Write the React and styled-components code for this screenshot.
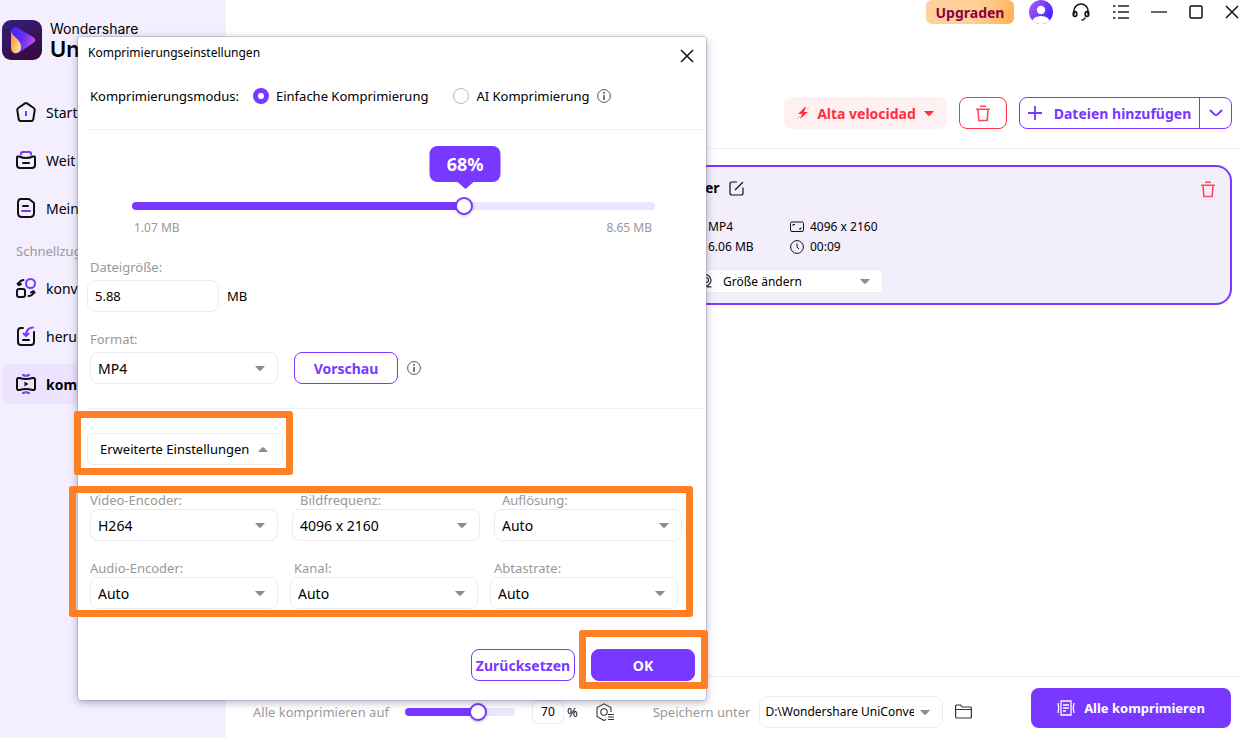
import React, { useState } from 'react'
import styled, { createGlobalStyle } from 'styled-components';

const GlobalStyle = createGlobalStyle`
  * { box-sizing: border-box; }
  body {
    margin: 0;
    background: #fff;
    color: #000;
    font-family: "Noto Sans", "Open Sans", sans-serif;
    font-size: 13px;
  }
  button, input, select { font-family: inherit; font-size: inherit; color: inherit; margin: 0; }
  button { cursor: pointer; padding: 0; white-space: nowrap; }
  svg { display: block; flex: none; }
`;

const Page = styled.div`
  position: relative;
  display: flex;
  min-height: 100vh;
  overflow: hidden;
`;

/* sidebar */
const Sidebar = styled.aside`
  flex: 0 0 226px;
  background: #f3effe;
  padding: 20px 2px;
`;
const Logo = styled.div`
  display: flex;
  gap: 8px;
  margin-bottom: 32px;
`;
const Brand = styled.div`
  font-family: Inter, sans-serif;
  font-size: 14px;
  line-height: 18px;
  white-space: nowrap;
`;
const Product = styled.div`
  font-size: 22px;
  font-weight: 600;
  line-height: 22px;
`;
const Nav = styled.nav`
  display: flex;
  flex-direction: column;
  gap: 8px;
`;
const NavItem = styled.a`
  display: flex;
  align-items: center;
  gap: 10px;
  height: 40px;
  padding-left: 14px;
  border-radius: 8px;
  font-size: 14px;
  font-weight: ${({ $active }) => ($active ? 700 : 400)};
  background: ${({ $active }) => ($active ? "#ece3ff" : "transparent")};
  color: #000;
  text-decoration: none;
`;
const NavTitle = styled.div`
  padding-left: 14px;
  line-height: 22px;
  margin: 4px 0 -2px;
  color: #999;
`;

/* main area */
const Main = styled.main`
  flex: 1;
  min-width: 0;
  display: flex;
  flex-direction: column;
`;
const WindowBar = styled.header`
  display: flex;
  justify-content: flex-end;
  align-items: center;
  height: 24px;
  padding-right: 3px;
`;
const Upgrade = styled.button`
  width: 88px;
  height: 24px;
  border: 0;
  border-radius: 6px;
  background: linear-gradient(110deg, #ffcf9c, #ffd09a 55%, #ffb04f);
  color: #8b0046;
  font-size: 14px;
  font-weight: 700;
  margin-right: 15px;
`;
const IconButton = styled.button`
  display: flex;
  align-items: center;
  justify-content: center;
  border: 0;
  background: none;
`;
const WindowButtons = styled.div`
  display: flex;
  align-items: center;
  gap: 22px;
  margin-left: 18px;
`;
const Toolbar = styled.div`
  display: flex;
  justify-content: flex-end;
  gap: 12px;
  margin: 73px 0 0 16px;
  padding: 0 10px 19px 0;
  border-bottom: 1px solid #f0f0f2;
`;
const SpeedButton = styled.button`
  display: flex;
  align-items: center;
  justify-content: center;
  gap: 8px;
  width: 163px;
  height: 32px;
  border: 0;
  border-radius: 8px;
  background: #fff1f2;
  color: #ff2e43;
  font-size: 14px;
  font-weight: 700;
`;
const TrashButton = styled(IconButton)`
  width: 48px;
  height: 32px;
  border: 1px solid #ff2e43;
  border-radius: 8px;
`;
const SplitButton = styled.div`
  display: flex;
  height: 32px;
  border: 1px solid #7838ff;
  border-radius: 8px;
  color: #7838ff;
`;
const AddButton = styled(IconButton)`
  width: 180px;
  gap: 12px;
  border-right: 1px solid #7838ff;
  font-size: 14px;
  font-weight: 700;
`;
const MoreButton = styled(IconButton)`
  width: 31px;
`;
const Card = styled.section`
  display: flex;
  justify-content: flex-end;
  align-items: flex-start;
  height: 140px;
  margin: 16px 10px 0 16px;
  padding: 10px 14px;
  border: 2px solid #7838ff;
  border-radius: 16px;
  background: #f3eefc;
`;
const CardTrash = styled(IconButton)`
  height: 24px;
`;
const FileInfo = styled.div`
  display: flex;
  flex-direction: column;
  width: 204px;
  margin-right: 318px;
  font-size: 12px;
`;
const FileName = styled.div`
  display: flex;
  align-items: center;
  gap: 9px;
  margin-left: 27px;
  line-height: 22px;
  font-size: 14px;
  font-weight: 700;
`;
const Facts = styled.dl`
  display: grid;
  grid-template-columns: 82px 1fr;
  row-gap: 2px;
  margin: 19px 0 13px 30px;
  line-height: 18px;
`;
const Fact = styled.dd`
  display: flex;
  align-items: center;
  gap: 6px;
  margin: 0;
  white-space: nowrap;
`;

/* footer */
const Footer = styled.footer`
  display: flex;
  align-items: center;
  margin-top: auto;
  height: 62px;
  padding: 8px 11px 0 27px;
  border-top: 1px solid #f0f0f2;
  white-space: nowrap;
`;
const Muted = styled.label`
  color: #999;
  line-height: 18px;
`;
const Percent = styled.input`
  width: 32px;
  height: 24px;
  border: 1px solid #ececee;
  border-radius: 6px;
  margin: 0 3px 0 17px;
  padding: 0;
  text-align: center;
  font-size: 12px;
`;
const FooterIcon = styled(IconButton)`
  width: 24px;
  margin-left: 16px;
`;
const FolderButton = styled(IconButton)`
  margin-left: 12px;
`;
const FooterSlider = styled.div`
  width: 110px;
  margin-left: 16px;
`;
const SavePath = styled.div`
  display: flex;
  align-items: center;
  gap: 9px;
  margin-left: 35px;
`;
const CompressAll = styled(IconButton)`
  align-self: flex-start;
  width: 200px;
  height: 40px;
  gap: 9px;
  margin: 3px 0 0 auto;
  border-radius: 8px;
  background: #7838ff;
  color: #fff;
  font-weight: 700;
`;

/* form parts */
const SelectBox = styled.div`
  position: relative;
  width: ${({ $width }) => $width || 188}px;
`;
const ArrowSpot = styled.span`
  position: absolute;
  right: 13px;
  top: 50%;
  margin-top: -2px;
  pointer-events: none;
`;
const IconSpot = styled.span`
  position: absolute;
  left: 20px;
  top: 5px;
  pointer-events: none;
`;
const SelectInput = styled.select`
  display: block;
  width: 100%;
  height: ${({ $small }) => ($small ? 24 : 32)}px;
  padding: ${({ $inset }) => `0 28px 0 ${$inset || 7}px`};
  border: 1px solid #ececee;
  border-radius: ${({ $small }) => ($small ? 4 : 8)}px;
  background: #fff;
  appearance: none;
  font-size: ${({ $fontSize }) => $fontSize || 14}px;
`;
const Range = styled.input`
  display: block;
  width: 100%;
  height: 18px;
  appearance: none;
  background: none;
  &::-webkit-slider-runnable-track {
    height: 8px;
    border-radius: 4px;
    background: linear-gradient(to right, #7838ff var(--fill), #ede5ff var(--fill));
  }
  &::-webkit-slider-thumb {
    appearance: none;
    width: 18px;
    height: 18px;
    margin-top: -5px;
    border: 2px solid #7838ff;
    border-radius: 50%;
    background: #fff;
    box-shadow: 0 1px 3px rgba(60, 30, 120, 0.3);
  }
`;

/* dialog */
const Dialog = styled.section`
  position: absolute;
  top: 37px;
  left: 78px;
  width: 628px;
  padding-bottom: 19px;
  border-radius: 3px;
  background: #fff;
  box-shadow: 0 0 0 1px rgba(120, 110, 150, 0.25), 0 2px 8px rgba(50, 40, 90, 0.4);
`;
const DialogHead = styled.header`
  display: flex;
  justify-content: space-between;
  align-items: flex-start;
  height: 42px;
  padding: 6px 9px 0 10px;
`;
const DialogTitle = styled.h1`
  margin: 0;
  font-size: 12px;
  font-weight: 400;
  line-height: 20px;
`;
const CloseButton = styled(IconButton)`
  width: 20px;
  height: 20px;
  margin-top: 3px;
`;
const Modes = styled.div`
  display: flex;
  align-items: center;
  height: 51px;
  margin-left: 9px;
  padding: 0 0 16px 3px;
  border-bottom: 1px solid #f0f0f2;
`;
const Radio = styled.label`
  display: flex;
  align-items: center;
  gap: 7px;
  margin-right: ${({ $after }) => $after}px;
  input {
    appearance: none;
    width: 16px;
    height: 16px;
    border: 1px solid #b9b5c4;
    border-radius: 50%;
  }
  input:checked { border: 5px solid #7838ff; }
`;
const ModeLabel = styled.span`
  width: 163px;
`;
const Level = styled.div`
  position: relative;
  padding: 67px 51px 0 54px;
`;
const Bubble = styled.output`
  position: absolute;
  top: 16px;
  width: 71px;
  transform: translateX(-50%);
  border-radius: 8px;
  background: #7838ff;
  color: #fff;
  font-size: 18px;
  font-weight: 700;
  line-height: 36px;
  text-align: center;
  &::after {
    content: "";
    position: absolute;
    left: 28px;
    top: 36px;
    border: 8px solid transparent;
    border-top: 7px solid #7838ff;
    border-bottom: 0;
  }
`;
const Limits = styled.div`
  display: flex;
  justify-content: space-between;
  padding: 4px 3px 0 2px;
  line-height: 18px;
  font-size: 12px;
  color: #999;
`;
const Form = styled.div`
  display: flex;
  flex-direction: column;
  margin: 21px 0 0 9px;
  padding: 0 0 24px 3px;
  border-bottom: 1px solid #f0f0f2;
`;
const FormLine = styled.div`
  display: flex;
  align-items: center;
  gap: 8px;
  margin: ${({ $flush }) => ($flush ? "4px 0 18px -3px" : "4px 0 0")};
`;
const SizeInput = styled.input`
  width: 132px;
  height: 32px;
  padding: 0 7px;
  border: 1px solid #ececee;
  border-radius: 8px;
`;
const OutlineButton = styled.button`
  width: 104px;
  height: 32px;
  border: 1px solid #7838ff;
  border-radius: 8px;
  background: #fff;
  color: #7838ff;
  font-size: 14px;
  font-weight: 700;
`;
const PrimaryButton = styled(OutlineButton)`
  background: #7838ff;
  color: #fff;
`;
const Preview = styled.div`
  display: flex;
  align-items: center;
  gap: 9px;
  margin-left: 8px;
`;
// orange frame laid around an area, $inset says how far it reaches out
const Marked = styled.div`
  position: relative;
  width: fit-content;
  &::after {
    content: "";
    position: absolute;
    inset: ${({ $inset }) => $inset};
    border: 7px solid #ff7f27;
    border-radius: 3px;
    pointer-events: none;
  }
`;
const Expand = styled.div`
  margin: 24px 0 26px 9px;
`;
const ExpandButton = styled.button`
  display: flex;
  align-items: center;
  justify-content: space-between;
  width: 196px;
  height: 32px;
  padding: 0 14px 0 12px;
  border: 1px solid #ececee;
  border-radius: 6px;
  background: #fff;
`;
const Options = styled.div`
  display: flex;
  flex-direction: column;
  gap: 18px;
  margin-left: 12px;
`;
const OptionRow = styled.div`
  display: flex;
  gap: ${({ $gap }) => $gap}px;
`;
const OptionLabel = styled(Muted)`
  display: block;
  padding-left: ${({ $indent }) => $indent || 0}px;
`;
const Actions = styled.div`
  display: flex;
  justify-content: flex-end;
  gap: 16px;
  margin: 40px 11px 0 0;
`;

const Arrow = ({ up, color = "#8c8c8c" }) => (
  <svg width="10" height="5" viewBox="0 0 10 5">
    <path d={up ? "M0 5h10L6 .6Q5-.3 4 .6z" : "M0 0h10L6 4.4Q5 5.3 4 4.4z"} fill={color} />
  </svg>
);

const InfoIcon = () => (
  <svg width="14" height="14" viewBox="0 0 14 14" fill="none" stroke="#555">
    <circle cx="7" cy="7" r="6.4" />
    <path d="M7 3v1.700M7 6v5" strokeWidth="1.600" />
  </svg>
);

const Cross = ({ size = 14 }) => (
  <svg width={size} height={size} viewBox="0 0 14 14" stroke="#111" strokeWidth="1.5">
    <path d="M1 1l12 12M13 1L1 13" />
  </svg>
);

const Trash = () => (
  <svg width="16" height="17" viewBox="0 0 16 17" fill="none" stroke="#ff4a5c" strokeWidth="1.6">
    <path d="M5 1.2h6M1 4.2h14M3 4.5l.8 11h8.4l.8-11" />
  </svg>
);

const AppLogo = () => (
  <svg width="40" height="40" viewBox="0 0 40 40">
    <defs>
      <linearGradient id="tile" x1="0" y1="0" x2=".4" y2="1">
        <stop offset="0" stopColor="#33207a" />
        <stop offset="1" stopColor="#380c42" />
      </linearGradient>
      <linearGradient id="play" x1="0" y1="0" x2="1" y2=".4">
        <stop offset="0" stopColor="#3a22ff" />
        <stop offset=".6" stopColor="#6a32f4" />
        <stop offset="1" stopColor="#c04cf8" />
      </linearGradient>
      <linearGradient id="flame" x1="0" y1="0" x2="1" y2=".7">
        <stop offset="0" stopColor="#ff8c3c" />
        <stop offset=".5" stopColor="#ffb45c" />
        <stop offset="1" stopColor="#ffe49a" />
      </linearGradient>
    </defs>
    <rect width="40" height="40" rx="9" fill="url(#tile)" />
    <path d="M9 12c0-4 3-6 7-4l15 9c3 2 3 4 0 6l-13 9c-4 2-9 1-9-4z" fill="url(#play)" />
    <path d="M9 11c1 6 10 8 10 16 0 5-4 7-7 6-2-1-3-3-3-6z" fill="url(#flame)" />
  </svg>
);

const NavIcon = ({ children }) => (
  <svg width="20" height="20" viewBox="0 0 20 20" fill="none" stroke="#111" strokeWidth="2" strokeLinecap="round" strokeLinejoin="round">
    {children}
  </svg>
);

const purple = "#7838ff";

const navTop = [
  { label: "Start", icon: <><path d="M8.6 1.6Q10 .6 11.4 1.6L17.7 6q1.3 1 1 2.4L17.3 17q-.4 2-2.3 2H5q-1.900 0-2.300-2L1.300 8.400Q1 7 2.300 6z" /><path d="M10 9v5" stroke={purple} strokeLinecap="butt" /></> },
  { label: "Weit", icon: <><path d="M5 4.500V3.500Q5 2 6.500 2h7Q15 2 15 3.500v1" stroke={purple} /><path d="M1 7.500Q1 6 3 6.500q7 3 14 0 2-.5 2 1V15q0 3-3 3H4q-3 0-3-3zM7 13h6" /></> },
  { label: "Mein", icon: <><path d="M5 1h8l5 4v10q0 4-4 4H6q-4 0-4-4V5q0-4 3-4zM7 8h5" /><path d="M6 13h8" stroke={purple} /></> },
];
const navQuick = [
  { label: "konv", icon: <><rect x="1" y="11" width="8" height="8" rx="2" /><circle cx="14.500" cy="5.500" r="4.500" stroke={purple} /><path d="M2.500 7q0-4 5-5M1.500 5.500l1.200 1.700L5 6M17.500 13.500q0 4-5 4.500M15 14.500l2.500-1.500 1 1.800" /></> },
  { label: "heru", icon: <><path d="M7 2H5Q2 2 2 5v11q0 3 3 3h10q3 0 3-3V6M7 14h6" /><path d="M10 9.500Q10 2 17 1.500M7.500 7.500L10 10l2.500-2.500" stroke={purple} /></> },
  { label: "kom", active: true, icon: <><path d="M1 5.500Q1 3.500 3.500 4q6.500 2 13 0Q19 3.500 19 5.500v9q0 2-2.500 1.500-6.500-2-13 0Q1 16.500 1 14.500z" /><path d="M8.500 7.500v5L12.500 10z" fill="#111" stroke="none" /><path d="M7 .8q3 2 6 0M7 19.200q3-2 6 0" stroke={purple} /></> },
];

const SelectField = ({ id, value, width, fontSize, small, inset, label, icon }) => (
  <SelectBox $width={width}>
    <SelectInput id={id} aria-label={label} $fontSize={fontSize} $small={small} $inset={inset}>
      <option>{value}</option>
    </SelectInput>
    {icon && <IconSpot>{icon}</IconSpot>}
    <ArrowSpot><Arrow /></ArrowSpot>
  </SelectBox>
);

const Option = ({ id, label, value, indent }) => (
  <div>
    <OptionLabel htmlFor={id} $indent={indent}>{label}</OptionLabel>
    <SelectField id={id} value={value} />
  </div>
);

const NavLinks = ({ items }) => items.map((item) => (
  <NavItem href="#" key={item.label} $active={item.active}>
    <NavIcon>{item.icon}</NavIcon>
    {item.label}
  </NavItem>
));

const App = () => {
  const [mode, setMode] = useState("simple");
  const [level, setLevel] = useState(64);
  const [target, setTarget] = useState(70);
  const [size, setSize] = useState("5.88");

  return (
    <Page>
      <GlobalStyle />
      <Sidebar>
        <Logo>
          <AppLogo />
          <Brand>
            Wondershare
            <Product>Un</Product>
          </Brand>
        </Logo>
        <Nav>
          <NavLinks items={navTop} />
          <NavTitle>Schnellzug</NavTitle>
          <NavLinks items={navQuick} />
        </Nav>
      </Sidebar>

      <Main>
        <WindowBar>
          <Upgrade>Upgraden</Upgrade>
          <IconButton aria-label="Konto">
            <svg width="24" height="24" viewBox="0 0 24 24">
              <defs>
                <linearGradient id="avatar" x1="0" y1="0" x2="1" y2=".6">
                  <stop offset="0" stopColor="#b45cf5" />
                  <stop offset="1" stopColor="#4326ff" />
                </linearGradient>
                <clipPath id="round"><circle cx="12" cy="12" r="12" /></clipPath>
              </defs>
              <g clipPath="url(#round)">
                <rect width="24" height="24" fill="url(#avatar)" />
                <circle cx="12" cy="10" r="4.200" fill="#fff" />
                <ellipse cx="12" cy="22" rx="9" ry="6" fill="#fff" />
              </g>
            </svg>
          </IconButton>
          <WindowButtons>
            <IconButton aria-label="Support">
              <svg width="20" height="20" viewBox="0 0 20 20" fill="none" stroke="#111" strokeWidth="1.600" strokeLinecap="round">
                <path d="M3 12V9a7 7 0 0 1 14 0v3M14 16q-1 2-3 2" />
                <ellipse cx="4" cy="12" rx="1.800" ry="2.400" />
                <ellipse cx="16" cy="12" rx="1.800" ry="2.400" />
              </svg>
            </IconButton>
            <IconButton aria-label="Menü">
              <svg width="16" height="16" viewBox="0 0 16 16" stroke="#222" strokeWidth="1.500">
                <path d="M0 2h2.500M5 2h11M0 8h2.500M5 8h11M0 14h2.500M5 14h11" />
              </svg>
            </IconButton>
            <IconButton aria-label="Minimieren">
              <svg width="16" height="16" viewBox="0 0 16 16" stroke="#333" strokeWidth="1.500"><path d="M0 8h16" /></svg>
            </IconButton>
            <IconButton aria-label="Maximieren">
              <svg width="14" height="14" viewBox="0 0 14 14" fill="none" stroke="#111" strokeWidth="1.500"><rect x="1" y="1" width="12" height="12" rx="1.500" /></svg>
            </IconButton>
            <IconButton aria-label="Beenden"><Cross /></IconButton>
          </WindowButtons>
        </WindowBar>

        <Toolbar>
          <SpeedButton>
            <svg width="12" height="14" viewBox="0 0 12 14">
              <path d="M8 1L1 8h4l-2 5 8-7H7l2-5z" fill="#ff2e43" />
              <path d="M1 12l2-2M0 13l1-1M10 3l2-2" stroke="#ffc14d" />
            </svg>
            Alta velocidad
            <Arrow color="#ff2e43" />
          </SpeedButton>
          <TrashButton aria-label="Alle entfernen"><Trash /></TrashButton>
          <SplitButton>
            <AddButton>
              <svg width="14" height="14" viewBox="0 0 14 14" stroke={purple} strokeWidth="1.800"><path d="M7 0v14M0 7h14" /></svg>
              Dateien hinzufügen
            </AddButton>
            <MoreButton aria-label="Mehr">
              <svg width="14" height="8" viewBox="0 0 14 8" fill="none" stroke={purple} strokeWidth="1.800"><path d="M1 1l4.500 4.500q1.500 1.200 3 0L13 1" /></svg>
            </MoreButton>
          </SplitButton>
        </Toolbar>

        <Card>
          <FileInfo>
            <FileName>
              er
              <svg width="15" height="15" viewBox="0 0 15 15" fill="none" stroke="#111" strokeWidth="1.200">
                <path d="M8 1H3Q1 1 1 3v9q0 2 2 2h9q2 0 2-2V6.500M6 9l8-8" />
              </svg>
            </FileName>
            <Facts>
              <Fact>MP4</Fact>
              <Fact>
                <svg width="14" height="12" viewBox="0 0 14 12" fill="none" stroke="#111"><rect x=".5" y="1" width="13" height="9.500" rx="1.500" /><path d="M3 5V3.500h2M11 6.500V8H9" /></svg>
                4096 x 2160
              </Fact>
              <Fact>6.06 MB</Fact>
              <Fact>
                <svg width="14" height="14" viewBox="0 0 14 14" fill="none" stroke="#111"><circle cx="7" cy="7" r="6.400" /><path d="M7 3.500V7l2 2" /></svg>
                00:09
              </Fact>
            </Facts>
            <SelectField
              label="Größe"
              value="Größe ändern"
              width={205}
              fontSize={12}
              small
              inset={44}
              icon={
                <svg width="14" height="14" viewBox="0 0 14 14" fill="none" stroke="#333" strokeWidth="1.200">
                  <path d="M10 11.500a6 6 0 1 1 2.500-3Q11 10 9.500 12.800h4" />
                  <circle cx="8" cy="6" r="2.500" />
                </svg>
              }
            />
          </FileInfo>
          <CardTrash aria-label="Entfernen"><Trash /></CardTrash>
        </Card>

        <Footer>
          <Muted htmlFor="target">Alle komprimieren auf</Muted>
          <FooterSlider>
            <Range id="target" type="range" value={target} onChange={(e) => setTarget(e.target.value)} style={{ "--fill": `${target}%` }} />
          </FooterSlider>
          <Percent aria-label="Prozent" value={target} onChange={(e) => setTarget(e.target.value)} />
          %
          <FooterIcon aria-label="Einstellungen">
            <svg width="20" height="18" viewBox="0 0 20 18" fill="none" stroke="#333" strokeWidth="1.100">
              <path d="M10 16.500l-2 1L1 13.500v-9L8 .8l7 3.700v4.500" />
              <circle cx="8" cy="9" r="3.200" />
              <path d="M12 11.500h6M12 14h6M12 16.500h6" />
            </svg>
          </FooterIcon>
          <SavePath>
            <Muted htmlFor="path">Speichern unter</Muted>
            <SelectField id="path" value="D:\Wondershare UniConverter" width={184} fontSize={12} inset={5} />
          </SavePath>
          <FolderButton aria-label="Ordner öffnen">
            <svg width="17" height="16" viewBox="0 0 17 16" fill="none" stroke="#333" strokeWidth="1.200">
              <path d="M.6 13V2q0-1 1-1h4l1.500 2H15q1.400 0 1.400 1v9q0 1-1.400 1H2Q.6 14 .6 13zM.6 5.500h16" />
            </svg>
          </FolderButton>
          <CompressAll>
            <svg width="18" height="16" viewBox="0 0 18 16" fill="none" stroke="#fff" strokeWidth="1.300">
              <path d="M4 1h10v14H4zM6 5h6M6 8h6M6 11h3M1 3q1.500 5 0 10M17 3q-1.500 5 0 10" />
            </svg>
            Alle komprimieren
          </CompressAll>
        </Footer>
      </Main>

      <Dialog role="dialog" aria-labelledby="dialog-title">
        <DialogHead>
          <DialogTitle id="dialog-title">Komprimierungseinstellungen</DialogTitle>
          <CloseButton aria-label="Schließen"><Cross /></CloseButton>
        </DialogHead>
        <Modes>
          <ModeLabel>Komprimierungsmodus:</ModeLabel>
          <Radio $after={25}>
            <input type="radio" name="mode" checked={mode === "simple"} onChange={() => setMode("simple")} />
            Einfache Komprimierung
          </Radio>
          <Radio $after={7}>
            <input type="radio" name="mode" checked={mode === "ai"} onChange={() => setMode("ai")} />
            AI Komprimierung
          </Radio>
          <InfoIcon />
        </Modes>

        <Level>
          <Bubble style={{ left: `calc(64px + (100% - 123px) * ${level / 100})` }}>{Number(level) + 4}%</Bubble>
          <Range type="range" aria-label="Komprimierung" value={level} onChange={(e) => setLevel(e.target.value)} style={{ "--fill": `${level}%` }} />
          <Limits>
            <span>1.07 MB</span>
            <span>8.65 MB</span>
          </Limits>
        </Level>

        <Form>
          <Muted htmlFor="size">Dateigröße:</Muted>
          <FormLine $flush>
            <SizeInput id="size" value={size} onChange={(e) => setSize(e.target.value)} />
            MB
          </FormLine>
          <Muted htmlFor="format">Format:</Muted>
          <FormLine>
            <SelectField id="format" value="MP4" />
            <Preview>
              <OutlineButton>Vorschau</OutlineButton>
              <InfoIcon />
            </Preview>
          </FormLine>
        </Form>

        <Expand>
          <Marked $inset="-22px -10px -10px -13px">
            <ExpandButton>Erweiterte Einstellungen <Arrow up /></ExpandButton>
          </Marked>
        </Expand>

        <Marked $inset="-5px -11px -8px -9px">
          <Options>
            <OptionRow $gap={14}>
              <Option id="video" label="Video-Encoder:" value="H264" />
              <Option id="rate" label="Bildfrequenz:" value="4096 x 2160" indent={8} />
              <Option id="resolution" label="Auflösung:" value="Auto" indent={8} />
            </OptionRow>
            <OptionRow $gap={12}>
              <Option id="audio" label="Audio-Encoder:" value="Auto" />
              <Option id="channel" label="Kanal:" value="Auto" indent={4} />
              <Option id="sampling" label="Abtastrate:" value="Auto" indent={4} />
            </OptionRow>
          </Options>
        </Marked>

        <Actions>
          <OutlineButton>Zurücksetzen</OutlineButton>
          <Marked $inset="-19px -13px -8px -12px">
            <PrimaryButton>OK</PrimaryButton>
          </Marked>
        </Actions>
      </Dialog>
    </Page>
  );
};

export default App;
